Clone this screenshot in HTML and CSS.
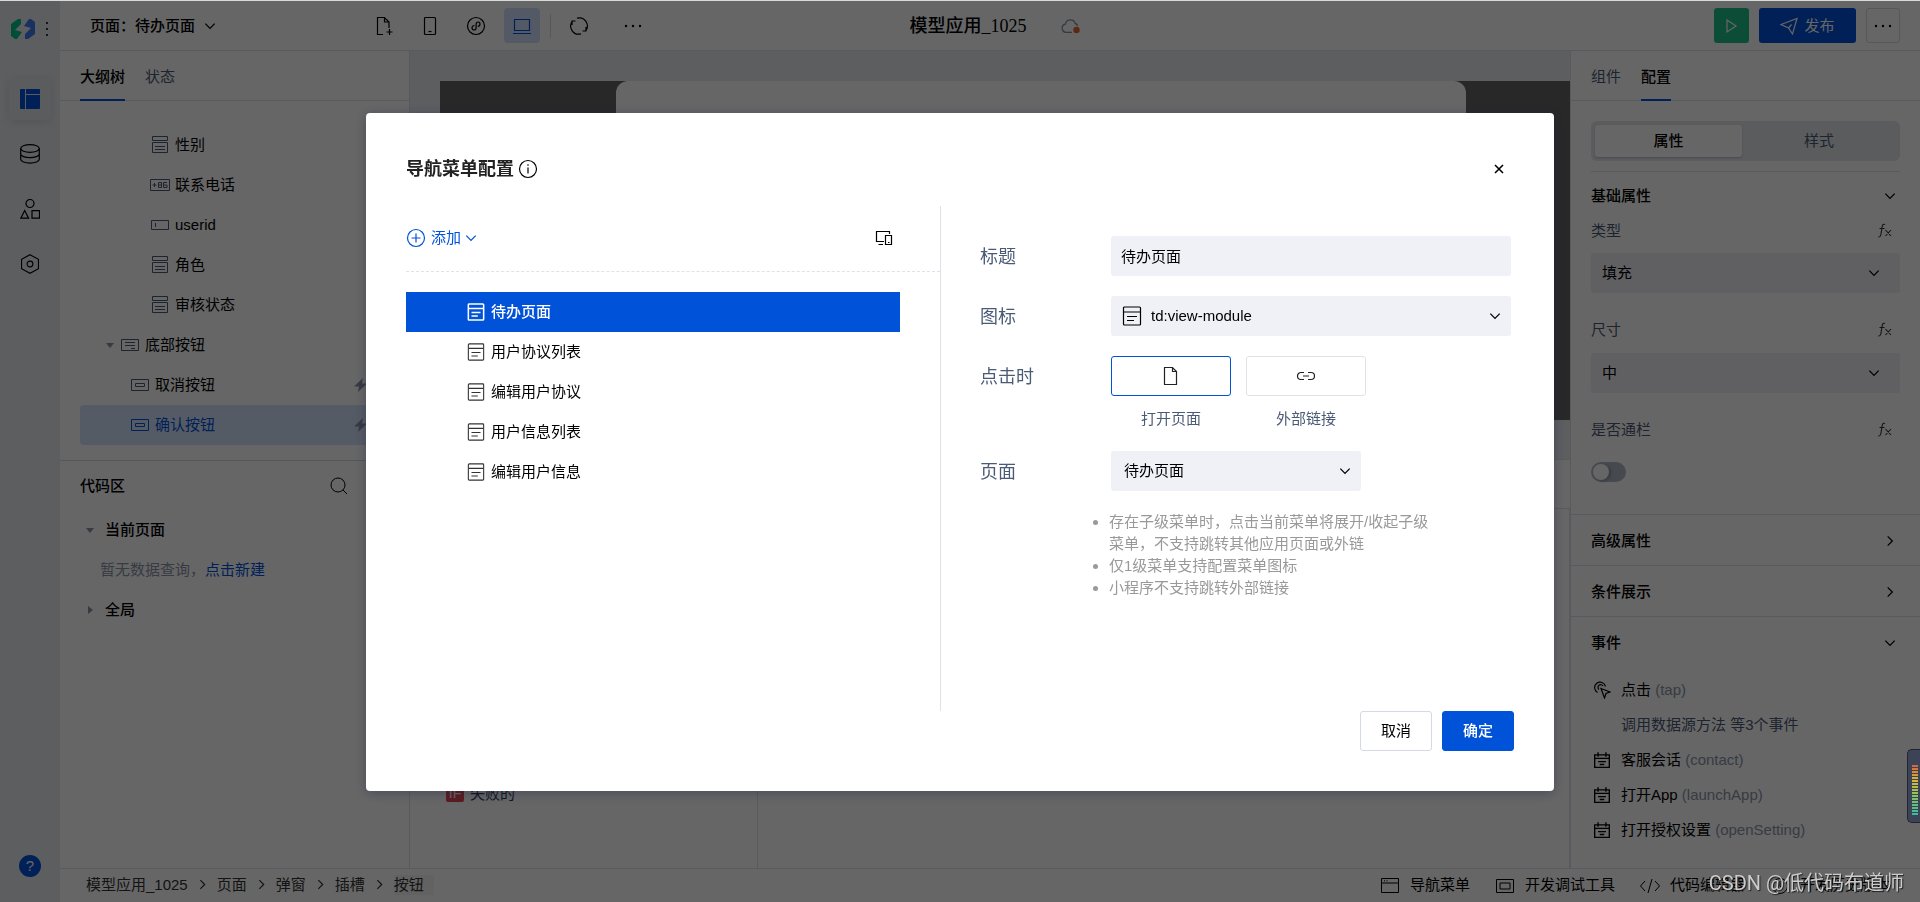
FILE: index.html
```html
<!DOCTYPE html>
<html lang="zh-CN">
<head>
<meta charset="utf-8">
<title>模型应用_1025</title>
<link rel="stylesheet" href="styles.css">
</head>
<body>
<svg class="sprite" aria-hidden="true">
  <symbol id="down" viewBox="0 0 12 12"><path d="M2 4l4 4 4-4"/></symbol>
  <symbol id="right" viewBox="0 0 12 12"><path d="M4 2l4 4-4 4"/></symbol>
  <symbol id="form" viewBox="0 0 20 20"><path d="M2.500 1.500h15v4h-15zM2.500 7.500h15v10h-15zM5 11.500h10M5 14.500h10"/></symbol>
  <symbol id="button" viewBox="0 0 20 20"><path d="M1.500 4.500h17v11h-17zM5.500 8.500h9v3h-9z"/></symbol>
  <symbol id="bolt" viewBox="0 0 16 16"><path d="M10 1L1 9.500h5L5 15l9-8.500H9z"/></symbol>
  <symbol id="module" viewBox="0 0 20 20"><rect x="1.500" y="1" width="17" height="18" rx="1"/><path d="M2 6h16M5 10.500h10M5 14.500h7"/></symbol>
  <symbol id="fx" viewBox="0 0 16 16"><path d="M8 1.500C6.500.8 5.500 1.500 5.200 3.500L3.800 12c-.3 1.600-1.200 2.200-2.600 2M2.500 5.500h5M8.500 7l5.500 6M14 7l-5.500 6"/></symbol>
  <symbol id="event" viewBox="0 0 16 16"><path d="M1.500 3.500h13v11h-13zM1.500 6.500h13M4.500 1v4M11.500 1v4M4.500 9.500h7M6 12h4"/></symbol>
  <symbol id="dots" viewBox="0 0 18 4"><circle cx="2" cy="2" r="1.200"/><circle cx="9" cy="2" r="1.200"/><circle cx="16" cy="2" r="1.200"/></symbol>
</svg>

<div class="app">
  <nav class="rail">
    <div class="brand">
      <svg class="logo" viewBox="0 0 24 20"><path fill="#00c48c" d="M0 5l7-5h3v5l-6 6 7 2-5 7H4l-4-3z"/><path fill="#3f7cf0" d="M24 15l-7 5h-3v-5l6-6-7-2 5-7h2l4 3z"/></svg>
      <svg class="kebab" viewBox="0 0 4 16"><circle cx="2" cy="2" r="1"/><circle cx="2" cy="8" r="1"/><circle cx="2" cy="14" r="1"/></svg>
    </div>
    <button class="rail-btn active" aria-label="页面"><svg viewBox="0 0 20 20"><path fill="#0052d9" stroke="none" d="M1 0h4v20H1a1 1 0 0 1-1-1V1a1 1 0 0 1 1-1zM6 0h13a1 1 0 0 1 1 1v4H6zM6 6h14v13a1 1 0 0 1-1 1H6z"/></svg></button>
    <button class="rail-btn" aria-label="数据"><svg viewBox="0 0 20 20"><ellipse cx="10" cy="4.500" rx="9.300" ry="3.800"/><path d="M.7 4.500v10.800c0 2.100 4.200 3.800 9.300 3.800s9.300-1.700 9.300-3.800V4.500M.7 9.900c0 2.100 4.200 3.800 9.300 3.800s9.300-1.700 9.300-3.800"/></svg></button>
    <button class="rail-btn" aria-label="组件"><svg viewBox="0 0 20 20"><circle cx="10" cy="4.500" r="4"/><path d="M4.700 11.500L.8 19.200h7.800zM12 11.700h7.500v7.500H12z"/></svg></button>
    <button class="rail-btn" aria-label="设置"><svg viewBox="0 0 20 22"><path d="M10 .8l9.300 5v10.400l-9.300 5-9.300-5V5.800z"/><circle cx="10" cy="11" r="3.200"/></svg></button>
    <button class="help" aria-label="帮助">?</button>
  </nav>

  <div class="main">
    <header class="header">
      <div class="header-left">
        <button class="page-pick">页面：待办页面<svg class="chev"><use href="#down"/></svg></button>
        <div class="tools">
          <button aria-label="新建页面"><svg viewBox="0 0 20 20"><path d="M9 18.500H3.500v-17h7l4.500 4.500v6M10.500 1.500V6H15M15.500 13v6M12.500 16h6"/></svg></button>
          <button aria-label="手机"><svg viewBox="0 0 20 20"><rect x="4.500" y="1.500" width="11" height="17" rx="1"/><path d="M8.500 15.500h3"/></svg></button>
          <button aria-label="小程序"><svg viewBox="0 0 20 20"><circle cx="10" cy="10" r="8.500"/><path d="M8.500 9.500c-1.500 0-2.500 1-2.500 2.300S7 14 8.100 14c1.200 0 2-.9 2-2.200V8.200c0-1.300.8-2.200 2-2.200S14 6.900 14 8.100s-1 2.300-2.300 2.300"/></svg></button>
          <button class="on" aria-label="电脑"><svg viewBox="0 0 20 20"><path d="M2.500 3.500h15v11h-15zM1 17.500h18"/></svg></button>
          <span class="sep"></span>
          <button aria-label="刷新"><svg viewBox="0 0 20 20"><path d="M8 2.200a8 8 0 0 1 8.500 12.700M12 17.800A8 8 0 0 1 3.500 5.100M3 9V5h3.500M17 11v4h-3.500"/></svg></button>
          <button class="more-tools" aria-label="更多"><svg class="dots"><use href="#dots"/></svg></button>
        </div>
      </div>
      <div class="header-mid">
        <h1 class="app-title">模型应用_1025</h1>
        <svg class="cloud" viewBox="0 0 20 16"><path fill="none" stroke="#8791a3" stroke-width="1.300" d="M11 14.300H5A4.200 4.200 0 0 1 4.500 6a5 5 0 0 1 9.700-.5c1.700.4 2.300 1.500 2.300 2.500"/><circle cx="15.500" cy="12" r="3.200" fill="#e8622c"/></svg>
      </div>
      <div class="actions">
        <button class="run" aria-label="预览"><svg viewBox="0 0 16 16"><path d="M3 2l9 6-9 6z"/></svg></button>
        <button class="publish"><svg viewBox="0 0 18 18"><path d="M1 7.500L17 1.500l-4.500 15.500-4-6zM8.500 11l3-3.500"/></svg>发布</button>
        <button class="more" aria-label="更多操作"><svg class="dots"><use href="#dots"/></svg></button>
      </div>
    </header>

    <div class="work">
      <aside class="left">
        <div class="tabs"><button class="tab active">大纲树</button><button class="tab">状态</button></div>
        <ul class="tree">
          <li class="deep"><svg class="ic"><use href="#form"/></svg>性别</li>
          <li class="deep"><svg class="ic" viewBox="0 0 20 20"><path d="M.5 4.500h19v11H.5zM2.500 10h4M4.500 8v4M8.500 7.500h3v5h-3zM8.500 10h3M17 7.500h-3.500v5H17V10h-3.500"/></svg>联系电话</li>
          <li class="deep"><svg class="ic" viewBox="0 0 20 20"><path d="M1.500 5.500h17v9h-17zM5.500 8v4"/></svg>userid</li>
          <li class="deep"><svg class="ic"><use href="#form"/></svg>角色</li>
          <li class="deep"><svg class="ic"><use href="#form"/></svg>审核状态</li>
          <li class="group"><span class="caret"></span><svg class="ic" viewBox="0 0 20 20"><path d="M1.500 4.500h17v11h-17zM5 7.500h10M5 10.500h10M11 13.500h4"/></svg>底部按钮</li>
          <li class="leaf"><svg class="ic"><use href="#button"/></svg>取消按钮<svg class="bolt"><use href="#bolt"/></svg></li>
          <li class="leaf selected"><svg class="ic"><use href="#button"/></svg>确认按钮<svg class="bolt"><use href="#bolt"/></svg></li>
        </ul>
        <section class="code">
          <div class="code-head"><h2>代码区</h2><button aria-label="搜索"><svg viewBox="0 0 18 18"><circle cx="8" cy="8" r="7"/><path d="M13 13l4 4"/></svg></button></div>
          <p class="code-row strong"><span class="caret"></span>当前页面</p>
          <p class="code-row hint">暂无数据查询，<a href="#new">点击新建</a></p>
          <p class="code-row strong"><span class="caret closed"></span>全局</p>
        </section>
      </aside>

      <main class="canvas">
        <div class="stage"><div class="dim"><div class="device"></div></div></div>
        <div class="query-bar"></div>
        <div class="query">
          <div class="query-list"><span class="if">IF</span>失败的</div>
          <div class="query-body"></div>
        </div>
      </main>

      <aside class="right">
        <div class="tabs"><button class="tab">组件</button><button class="tab active">配置</button></div>
        <div class="segment"><button class="on">属性</button><button>样式</button></div>
        <section class="props">
          <h3 class="sec">基础属性<svg class="chev"><use href="#down"/></svg></h3>
          <div class="prop"><label for="kind">类型</label><svg class="fx"><use href="#fx"/></svg></div>
          <div class="pick"><select id="kind"><option>填充</option></select><svg class="chev"><use href="#down"/></svg></div>
          <div class="prop tall"><label for="size">尺寸</label><svg class="fx"><use href="#fx"/></svg></div>
          <div class="pick"><select id="size"><option>中</option></select><svg class="chev"><use href="#down"/></svg></div>
          <div class="prop tall"><label for="wide">是否通栏</label><svg class="fx"><use href="#fx"/></svg></div>
          <input class="switch" id="wide" type="checkbox">
        </section>
        <h3 class="sec ruled">高级属性<svg class="chev"><use href="#right"/></svg></h3>
        <h3 class="sec ruled">条件展示<svg class="chev"><use href="#right"/></svg></h3>
        <h3 class="sec ruled">事件<svg class="chev"><use href="#down"/></svg></h3>
        <ul class="events">
          <li><svg class="ev" viewBox="0 0 18 18"><path d="M4.500 11.500a5.500 5.500 0 1 1 8-6M6 8.500a2.700 2.700 0 1 1 4-3.500M8 7.500l9 3.500-4 1.500L11.500 17z"/></svg><span>点击 <em>(tap)</em></span></li>
          <li class="note">调用数据源方法 等3个事件</li>
          <li><svg class="ev"><use href="#event"/></svg><span>客服会话 <em>(contact)</em></span></li>
          <li><svg class="ev"><use href="#event"/></svg><span>打开App <em>(launchApp)</em></span></li>
          <li><svg class="ev"><use href="#event"/></svg><span>打开授权设置 <em>(openSetting)</em></span></li>
        </ul>
      </aside>
    </div>

    <footer class="footer">
      <div class="crumbs">
        <span>模型应用_1025</span><svg class="chev"><use href="#right"/></svg><span>页面</span><svg class="chev"><use href="#right"/></svg><span>弹窗</span><svg class="chev"><use href="#right"/></svg><span>插槽</span><svg class="chev"><use href="#right"/></svg><span class="last">按钮</span>
      </div>
      <div class="dock">
        <button><svg viewBox="0 0 20 20"><path d="M1.500 3.500h17v14h-17zM1.500 8h17M4 5.800h1M6.500 5.800h1"/></svg>导航菜单</button>
        <button><svg viewBox="0 0 20 20"><path d="M1.500 4.500h17v13h-17zM5 8h10v6H5z"/></svg>开发调试工具</button>
        <button><svg viewBox="0 0 20 20"><path d="M5 6l-4.500 5L5 16M15 6l4.500 5-4.500 5M12 4L8 18"/></svg>代码编辑器</button>
        <button><svg viewBox="0 0 20 20"><circle cx="10" cy="11" r="7.500"/><path d="M10 6v5l3 2.500"/></svg>开发历史版本</button>
      </div>
    </footer>
  </div>
</div>

<div class="mask">
  <div class="modal" role="dialog" aria-labelledby="dlg">
    <div class="modal-head">
      <h2 id="dlg">导航菜单配置</h2>
      <svg class="info" viewBox="0 0 20 20"><circle cx="10" cy="10" r="8.500"/><path d="M10 8.500v6M10 5.200v1.600"/></svg>
      <button class="close" aria-label="关闭"><svg viewBox="0 0 12 12"><path d="M2 2l8 8M10 2l-8 8"/></svg></button>
    </div>
    <div class="modal-body">
      <div class="menus">
        <div class="menu-bar">
          <button class="add"><svg class="plus" viewBox="0 0 20 20"><circle cx="10" cy="10" r="8.500"/><path d="M10 5.500v9M5.500 10h9"/></svg>添加<svg class="chev"><use href="#down"/></svg></button>
          <svg class="devices" viewBox="0 0 18 16"><path d="M9 11.500H1.500v-10h13V4M3.500 14.500H8M10.500 5.500h6v9h-6zM13 12.500h1.500"/></svg>
        </div>
        <ul class="menu-list">
          <li class="picked"><svg><use href="#module"/></svg>待办页面</li>
          <li><svg><use href="#module"/></svg>用户协议列表</li>
          <li><svg><use href="#module"/></svg>编辑用户协议</li>
          <li><svg><use href="#module"/></svg>用户信息列表</li>
          <li><svg><use href="#module"/></svg>编辑用户信息</li>
        </ul>
      </div>
      <form class="detail">
        <label for="title">标题</label>
        <input class="text" id="title" type="text" value="待办页面">
        <label for="icon">图标</label>
        <div class="pick with-icon"><svg class="module"><use href="#module"/></svg><select id="icon"><option>td:view-module</option></select><svg class="chev"><use href="#down"/></svg></div>
        <span class="label">点击时</span>
        <div class="choices">
          <div class="choice on"><button type="button" aria-labelledby="open-page"><svg viewBox="0 0 20 20"><path d="M3.500 1.500h8l4 4v13h-12zM11.500 1.500v4h4"/></svg></button><span id="open-page">打开页面</span></div>
          <div class="choice"><button type="button" aria-labelledby="open-link"><svg class="link" viewBox="0 0 20 20"><path d="M8 6.500H5a3.500 3.500 0 0 0 0 7h3M12 6.500h3a3.500 3.500 0 0 1 0 7h-3M7 10h6"/></svg></button><span id="open-link">外部链接</span></div>
        </div>
        <label for="page">页面</label>
        <div class="pick short"><select id="page"><option>待办页面</option></select><svg class="chev"><use href="#down"/></svg></div>
        <ul class="tips">
          <li>存在子级菜单时，点击当前菜单将展开/收起子级菜单，不支持跳转其他应用页面或外链</li>
          <li>仅1级菜单支持配置菜单图标</li>
          <li>小程序不支持跳转外部链接</li>
        </ul>
      </form>
    </div>
    <div class="modal-foot"><button class="btn">取消</button><button class="btn primary">确定</button></div>
  </div>
</div>
<div class="gauge"><div class="gauge-scale"></div></div>
<div class="credit">CSDN @低代码布道师</div>
</body>
</html>
```
FILE: styles.css
```css
* { box-sizing: border-box; }
html, body { height: 100%; }
body {
  margin: 0;
  overflow: hidden;
  background: #d6dcdb;
  color: #000;
  font: 15px/20px "Liberation Sans", "Noto Sans CJK SC", sans-serif;
}
h1, h2, h3, p, ul { margin: 0; padding: 0; font-size: 15px; font-weight: 500; }
ul { list-style: none; font-weight: 400; }
em { font-style: normal; color: #8b95a7; }
button { padding: 0; border: 0; background: none; color: inherit; font: inherit; }
svg { display: block; flex: none; fill: none; stroke: currentColor; stroke-width: 1.200; }
.sprite { position: absolute; width: 0; height: 0; }
.chev { width: 14px; height: 14px; stroke-width: 1.100; }
.dots { width: 18px; height: 4px; fill: currentColor; stroke: none; }

.app { display: grid; grid-template-columns: 60px 1fr; height: 100%; padding-top: 1px; }
.main { display: grid; grid-template-rows: 50px 1fr 34px; min-width: 0; min-height: 0; background: #fff; }

/* rail */
.rail { display: flex; flex-direction: column; align-items: center; gap: 13px; padding-bottom: 25px; background: #e8ebf0; }
.brand { display: flex; align-items: center; gap: 10px; height: 56px; margin-bottom: 8px; }
.logo { width: 24px; height: 20px; stroke: none; }
.kebab { width: 4px; height: 16px; fill: #000; stroke: none; }
.rail-btn { display: grid; place-items: center; width: 42px; height: 42px; border-radius: 4px; }
.rail-btn svg { width: 20px; height: 20px; }
.rail-btn.active { background: #e2e5ea; box-shadow: 0 2px 8px #cdd2da; }
.help { width: 22px; height: 22px; margin-top: auto; border-radius: 50%; background: #0052d9; color: #fff; }

/* header */
.header { display: grid; grid-template-columns: 1fr auto 1fr; align-items: center; padding: 0 20px 0 30px; border-bottom: 1px solid #dfe2e8; }
.header-left, .header-mid { display: flex; align-items: center; }
.header-mid { gap: 34px; }
.page-pick { display: flex; align-items: center; gap: 8px; width: 276px; font-weight: 500; }
.tools { display: flex; align-items: center; gap: 10px; }
.tools button { display: grid; place-items: center; width: 36px; height: 35px; border-radius: 4px; }
.tools svg:not(.dots) { width: 20px; height: 20px; }
.tools .on { background: #cfdffc; color: #0052d9; }
.tools .sep { width: 1px; height: 24px; background: #d5d9e0; }
.tools .more-tools { margin-left: 8px; }
.app-title { font: 500 18px/24px "Liberation Serif", "Noto Sans CJK SC", serif; }
.cloud { width: 20px; height: 16px; stroke: none; }
.actions { display: flex; gap: 10px; justify-content: flex-end; }
.actions button { display: flex; align-items: center; justify-content: center; height: 35px; border-radius: 3px; }
.run { width: 35px; background: #20c08a; color: #fff; }
.run svg { width: 16px; height: 16px; }
.publish { gap: 6px; width: 97px; background: #0052d9; color: #fff; }
.publish svg { width: 18px; height: 18px; }
.actions .more { width: 34px; border: 1px solid #d5d9e0; }

/* panels */
.work { display: grid; grid-template-columns: 350px 1fr 350px; min-height: 0; }
.left { border-right: 1px solid #dfe2e8; }
.right { border-left: 1px solid #dfe2e8; }
.tabs { display: flex; gap: 20px; height: 50px; padding: 0 20px; border-bottom: 1px solid #dfe2e8; }
.tab { height: 50px; padding-top: 3px; border-bottom: 2px solid transparent; color: #4b5b76; }
.tab.active { border-color: #0052d9; color: #000; font-weight: 500; }
.caret { display: grid; place-items: center; width: 20px; }
.caret::before { content: ""; border: 4px solid transparent; border-top: 5px solid #8791a3; border-bottom: 0; }
.caret.closed::before { border: 4px solid transparent; border-left: 5px solid #8791a3; border-right: 0; }
.tree { padding: 24px 20px 15px; border-bottom: 1px solid #d5d9e0; }
.tree li { display: flex; align-items: center; height: 40px; padding-right: 20px; border-radius: 4px; }
.tree .ic { width: 20px; height: 20px; margin-right: 5px; color: #4b5b76; stroke-width: 1; }
.tree .deep { padding-left: 70px; }
.tree .group { padding-left: 20px; }
.tree .leaf { padding-left: 50px; }
.tree .selected, .tree .selected .ic { color: #0052d9; }
.tree .selected { background: #d4e3fc; }
.bolt { width: 16px; height: 16px; margin-left: auto; fill: #8791a3; stroke: none; }
.code-head { display: flex; align-items: center; justify-content: space-between; height: 49px; padding: 0 61px 0 20px; }
.code-head svg { width: 18px; height: 18px; stroke-width: 1; }
.code-row { display: flex; align-items: center; height: 40px; padding-left: 20px; }
.code-row .caret { margin-right: 5px; }
.code-row.hint { padding-left: 40px; color: #8b95a7; font-weight: 400; }
.code-row a { color: #0052d9; text-decoration: none; }

/* canvas */
.canvas { display: grid; grid-template-rows: 408px 49px 1fr; min-width: 0; }
.stage { padding: 30px 0 39px 30px; background: #e8ebf0; }
.dim { height: 100%; padding: 0 104px 0 176px; background: #646464; }
.device { height: 100%; border-radius: 12px; background: #fff; }
.query-bar { border-top: 1px solid #dfe2e8; }
.query { display: grid; grid-template-columns: 348px 1fr; border-top: 1px solid #dfe2e8; }
.query-list { display: flex; align-items: flex-start; gap: 6px; padding: 275px 0 0 36px; border-right: 1px solid #dfe2e8; color: #2c3a55; }
.if { width: 18px; height: 18px; border-radius: 2px; background: #e54552; color: #fff; font-size: 14px; line-height: 18px; text-align: center; }
.query-body { border-right: 1px solid #dfe2e8; }

/* properties */
.segment { display: grid; grid-template-columns: 147fr 154fr; height: 40px; margin: 20px 20px 10px; padding: 4px; border-radius: 6px; background: #e2e5ea; }
.segment button { border-radius: 3px; color: #4b5b76; }
.segment .on { background: #fff; color: #000; font-weight: 500; box-shadow: 0 1px 2px #b4bac6; }
.props { margin: 0 20px; padding-bottom: 32px; border-top: 1px solid #dfe2e8; }
.sec { display: flex; align-items: center; justify-content: space-between; height: 48px; padding-right: 3px; }
.sec.ruled { height: 51px; padding: 2px 23px 0 20px; border-top: 1px solid #dfe2e8; }
.prop { display: flex; align-items: center; justify-content: space-between; height: 33px; padding: 0 7px 12px 0; color: #4b5b76; }
.prop.tall { height: 60px; padding-top: 26px; }
.fx { width: 16px; height: 16px; color: #333; stroke-width: 1.100; }
.pick { position: relative; border-radius: 3px; background: #f0f1f6; }
.pick select { width: 100%; height: 40px; padding: 0 36px 0 11px; border: 0; background: none; appearance: none; color: #000; font: inherit; }
.pick .chev { position: absolute; right: 19px; top: 13px; pointer-events: none; }
.switch { display: block; width: 35px; height: 20px; margin: 9px 0 0; padding: 2px; border-radius: 10px; background: #b0b8c6; appearance: none; }
.switch::before { content: ""; display: block; width: 16px; height: 16px; border-radius: 50%; background: #fff; box-shadow: 2px 1px 3px #8791a3; }
.events { padding: 5px 20px; }
.events li { display: flex; align-items: center; gap: 10px; height: 35px; }
.events .ev { width: 18px; height: 18px; margin-left: 2px; }
.events .note { padding-left: 30px; color: #4b5b76; }

/* footer */
.footer { display: flex; align-items: center; justify-content: space-between; padding: 0 30px 2px 26px; border-top: 1px solid #dfe2e8; white-space: nowrap; }
.crumbs { display: flex; align-items: center; gap: 8px; color: #333; }
.crumbs .chev { width: 13px; height: 13px; }
.crumbs .last { padding-right: 10px; background: #f4f4f6; }
.dock { display: flex; gap: 25px; }
.dock button { display: flex; align-items: center; gap: 10px; }
.dock svg { width: 20px; height: 20px; stroke-width: 1; }

/* dialog */
.mask { position: fixed; inset: 1px 0 0; display: grid; place-items: center; background: rgba(0, 0, 0, .6); }
.modal { display: flex; flex-direction: column; width: 1188px; max-width: 96%; min-height: 678px; padding: 40px; border-radius: 4px; background: #fff; box-shadow: 0 2px 12px rgba(30, 35, 70, .4); }
.modal-head { display: flex; align-items: center; height: 32px; margin-bottom: 21px; }
.modal-head h2 { color: #222; font-size: 18px; font-weight: 700; }
.info { width: 20px; height: 20px; margin-left: 4px; }
.close { margin-left: auto; padding: 9px; }
.close svg { width: 12px; height: 12px; stroke-width: 1.600; }
.modal-body { display: grid; grid-template-columns: 535px 1fr; flex: 1; }
.menus { border-right: 1px solid #dfe2e8; }
.menu-bar { display: flex; align-items: center; justify-content: space-between; height: 66px; padding-right: 47px; border-bottom: 1px dashed #dfe2e8; }
.add { display: flex; align-items: center; color: #0052d9; }
.plus { width: 20px; height: 20px; margin-right: 5px; }
.add .chev { margin-left: 3px; }
.devices { width: 18px; height: 16px; }
.menu-list { padding: 20px 40px 0 0; }
.menu-list li { display: flex; align-items: center; gap: 6px; height: 40px; padding-left: 61px; }
.menu-list svg { width: 18px; height: 18px; color: #333; }
.menu-list .picked { background: #0052d9; }
.menu-list .picked, .menu-list .picked svg { color: #fff; font-weight: 500; stroke-width: 1.700; }
.detail { display: grid; grid-template-columns: 131px 1fr; align-content: start; row-gap: 20px; padding: 30px 3px 0 39px; }
.detail > label, .label { padding-top: 2px; color: #4b5b76; font-size: 18px; line-height: 38px; }
.text { width: 100%; height: 40px; padding: 0 10px; border: 0; border-radius: 3px; background: #f0f1f6; font: inherit; }
.with-icon select { padding-left: 40px; }
.with-icon .module { position: absolute; left: 11px; top: 10px; width: 20px; height: 20px; }
.detail .pick .chev { right: 9px; }
.short { width: 250px; }
.short select { padding-left: 13px; }
.choices { display: flex; gap: 15px; height: 75px; }
.choice { display: flex; flex-direction: column; gap: 13px; width: 120px; color: #4b5b76; text-align: center; }
.choice button { display: grid; place-items: center; height: 40px; border: 1px solid #dfe2e8; border-radius: 3px; color: #222; }
.choice.on button { border-color: #0052d9; }
.choice svg { width: 20px; height: 20px; }
.tips { grid-column: 2; width: 328px; margin-left: -2px; list-style: disc; color: #999; line-height: 22px; }
.modal-foot { display: flex; justify-content: flex-end; gap: 10px; }
.btn { width: 72px; height: 40px; border: 1px solid #d5d9e3; border-radius: 3px; }
.btn.primary { border-color: #0052d9; background: #0052d9; color: #fff; font-weight: 500; }

/* floating widgets */
.gauge { position: fixed; right: 0; top: 749px; width: 13px; height: 74px; padding: 15px 2px 7px 4px; border: 1px solid #22252f; border-right: 0; border-radius: 5px 0 0 5px; background: #3d4356; }
.gauge-scale { height: 100%; background: repeating-linear-gradient(transparent 0 2px, #3d4356 2px 3px), linear-gradient(#d9603a, #d9b63a 30%, #8fc45a 60%, #3ab8a0); }
.credit { position: fixed; right: 16px; bottom: 6px; color: #ccc; font: 20px/26px Roboto, "Noto Sans CJK SC", sans-serif; text-shadow: 1px 1px 1px #222; }
```
